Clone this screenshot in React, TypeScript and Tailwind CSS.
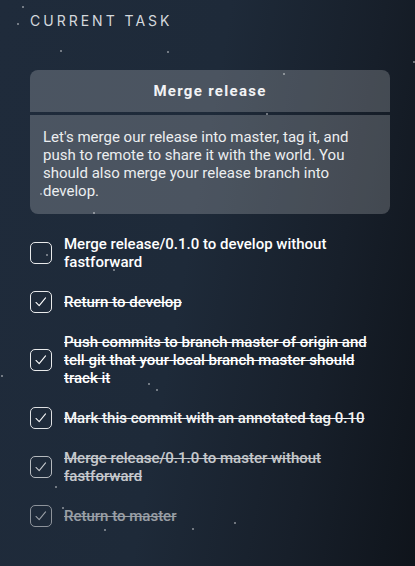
import React from "react";

const stars: [number, number][] = [
  [22, 6], [17, 23], [60, 50], [167, 51], [413, 61], [283, 73], [266, 113],
  [93, 212], [40, 193], [46, 254], [113, 269], [1, 375], [148, 383], [156, 389],
  [55, 486], [62, 507], [104, 529], [192, 528], [234, 522],
];

type Item = { text: string; done: boolean; op: string };

const items: Item[] = [
  { text: "Merge release/0.1.0 to develop without fastforward", done: false, op: "opacity-100" },
  { text: "Return to develop", done: true, op: "opacity-100" },
  { text: "Push commits to branch master of origin and tell git that your local branch master should track it", done: true, op: "opacity-100" },
  { text: "Mark this commit with an annotated tag 0.10", done: true, op: "opacity-95" },
  { text: "Merge release/0.1.0 to master without fastforward", done: true, op: "opacity-75" },
  { text: "Return to master", done: true, op: "opacity-55" },
];

function Box({ done }: { done: boolean }) {
  return (
    <div className="w-[22px] h-[22px] shrink-0 rounded-[5px] border border-white/90 flex items-center justify-center">
      {done && (
        <svg width="22" height="22" viewBox="0 0 22 22" fill="none">
          <path d="M5.5 11.5 L9 15 L16 6.5" stroke="white" strokeWidth="1.2" strokeLinecap="round" strokeLinejoin="round" />
        </svg>
      )}
    </div>
  );
}

export default function App() {
  return (
    <div
      className="relative w-[415px] h-[566px] overflow-hidden bg-[linear-gradient(100deg,#1f2b3b_0%,#1e2a39_45%,#171f2a_75%,#0f141b_100%)] text-white"
      style={{ fontFamily: "Roboto, 'Liberation Sans', sans-serif" }}
    >
      {stars.map(([x, y], i) => (
        <div
          key={i}
          className="absolute w-[2px] h-[2px] rounded-full bg-white/50"
          style={{ left: x, top: y }}
        />
      ))}
      <div className="relative px-[30px] pt-[13px]">
        <div className="text-[14px] leading-[16px] tracking-[3px] text-[#d4d8dd] font-normal" style={{ fontFamily: "Inter, Roboto, sans-serif" }}>
          CURRENT TASK
        </div>
        <div className="mt-[41px] w-[360px] rounded-[8px] overflow-hidden flex flex-col gap-[3px]">
          <div className="h-[42px] bg-white/20 flex items-center justify-center text-[15px] font-bold tracking-[1.3px] text-[#f2f3f5]">
            Merge release
          </div>
          <div className="bg-white/20 px-[13px] pt-[13px] pb-[14px] text-[15px] leading-[18px] text-[#eceef0]">
            Let's merge our release into master, tag it, and push to remote to share it with the world. You should also merge your release branch into develop.
          </div>
        </div>
        <div className="mt-[21px] flex flex-col gap-[20px]">
          {items.map((it, i) => (
            <div key={i} className={`flex items-center gap-[12px] ${it.op}`}>
              <Box done={it.done} />
              <div className={`text-[15px] leading-[18px] font-medium pr-[15px] ${it.done ? "line-through" : ""}`}>
                {it.text}
              </div>
            </div>
          ))}
        </div>
      </div>
    </div>
  );
}
